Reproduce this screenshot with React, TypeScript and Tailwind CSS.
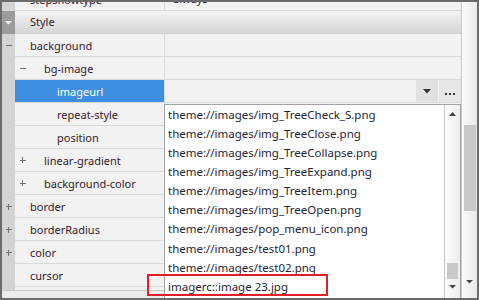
import React from "react";

type Row = {
  name: string;
  level: number;
  sign?: "minus" | "plus";
  value?: string;
  selected?: boolean;
};

const rows: Row[] = [
  { name: "stepshowtype", level: 0, value: "always" },
  { name: "background", level: 0, sign: "minus" },
  { name: "bg-image", level: 1, sign: "minus" },
  { name: "imageurl", level: 2, selected: true },
  { name: "repeat-style", level: 2 },
  { name: "position", level: 2 },
  { name: "linear-gradient", level: 1, sign: "plus" },
  { name: "background-color", level: 1, sign: "plus" },
  { name: "border", level: 0, sign: "plus" },
  { name: "borderRadius", level: 0, sign: "plus" },
  { name: "color", level: 0, sign: "plus" },
  { name: "cursor", level: 0 },
  { name: "", level: 0 },
];

const options = [
  "theme://images/img_TreeCheck_S.png",
  "theme://images/img_TreeClose.png",
  "theme://images/img_TreeCollapse.png",
  "theme://images/img_TreeExpand.png",
  "theme://images/img_TreeItem.png",
  "theme://images/img_TreeOpen.png",
  "theme://images/pop_menu_icon.png",
  "theme://images/test01.png",
  "theme://images/test02.png",
  "imagerc::image 23.jpg",
];

const font = { fontFamily: '"Noto Sans", "Open Sans", sans-serif' };

function Sign({ type }: { type?: "minus" | "plus" }) {
  if (!type) return null;
  return (
    <span className="w-[7px] h-[7px] relative flex items-center justify-center">
      <span className="absolute w-[6px] h-px bg-[#707070]" />
      {type === "plus" && <span className="absolute w-px h-[6px] bg-[#707070]" />}
    </span>
  );
}

function PropRow({ row }: { row: Row }) {
  const top = row.level === 0;
  return (
    <div className="h-[23px] flex shrink-0">
      {/* gutter */}
      <div className="w-[13px] bg-[#d3d3d3] flex items-center justify-center">
        {top && <Sign type={row.sign} />}
      </div>
      <div className="flex-1 flex border-b border-[#d9d9d9]">
        <div
          className={`w-[149px] flex items-center ${row.selected ? "bg-[#3d8fe1] text-white" : "bg-[#f2f2f2] text-[#35202c]"}`}
        >
          {row.level === 1 && (
            <span className="pl-[4px] w-[29px] flex">
              <Sign type={row.sign} />
            </span>
          )}
          <span
            className={`text-[11px] leading-none ${row.level === 0 ? "pl-[15px]" : row.level === 2 ? "pl-[42px]" : ""}`}
          >
            {row.name}
          </span>
        </div>
        <div className="w-px bg-[#d9d9d9]" />
        <div className="flex-1 bg-[#f2f2f2] flex items-center">
          {row.value && <span className="pl-[8px] text-[11px] text-[#35202c]">{row.value}</span>}
          {row.selected && (
            <div className="ml-auto h-full flex">
              <div className="w-[22px] h-full bg-[#e1e1e1] flex items-center justify-center">
                <svg width="8" height="5" viewBox="0 0 8 5">
                  <path d="M0 0H8L4 4.5Z" fill="#333" />
                </svg>
              </div>
              <div className="w-px bg-[#f2f2f2]" />
              <div className="w-[22px] h-full bg-[#e6e6e6] flex items-center justify-center pt-[5px] gap-[2px]">
                <span className="w-[2px] h-[2px] bg-[#333]" />
                <span className="w-[2px] h-[2px] bg-[#333]" />
                <span className="w-[2px] h-[2px] bg-[#333]" />
              </div>
            </div>
          )}
        </div>
      </div>
    </div>
  );
}

function StyleHeader() {
  return (
    <div className="h-[23px] flex shrink-0">
      <div className="w-[13px] bg-[#9b9b9b] flex items-center justify-center">
        <svg width="7" height="4" viewBox="0 0 7 4">
          <path d="M0 0H7L3.5 3.5Z" fill="#fff" />
        </svg>
      </div>
      <div className="flex-1 flex items-center bg-gradient-to-b from-[#f3f3f3] to-[#d6d6d6] border-b border-[#d0d0d0]">
        <span className="pl-[15px] text-[11px] text-[#35202c]">Style</span>
      </div>
    </div>
  );
}

export default function App() {
  return (
    <div
      className="w-[479px] h-[300px] relative overflow-hidden border-2 border-[#6b6b6b] bg-[#f0f0f0] flex"
      style={font}
    >
      {/* grid */}
      <div className="flex-1 flex flex-col">
        <div className="flex-1 overflow-hidden flex flex-col">
          <div className="-mt-[14px] flex flex-col">
            <PropRow row={rows[0]} />
            <StyleHeader />
            {rows.slice(1).map((r, i) => (
              <PropRow key={i} row={r} />
            ))}
          </div>
        </div>
        <div className="h-[8px] border-t border-[#c8c8c8] bg-[#ececec] shrink-0" />
      </div>

      {/* main scrollbar */}
      <div className="w-[16px] border-l border-[#c9c9c9] bg-gradient-to-r from-[#fbfbfb] to-[#e9e9e9] flex flex-col items-center">
        <div className="h-[123px]" />
        <div className="w-[12px] h-[86px] bg-[#c9c9c9]" />
        <div className="flex-1" />
        <svg width="7" height="4" viewBox="0 0 7 4" className="mb-[14px]">
          <path d="M0 0H7L3.5 3.5Z" fill="#444" />
        </svg>
      </div>

      {/* dropdown list */}
      <div className="absolute left-[162px] top-[102px] w-[297px] h-[200px] bg-white border border-[#a3a3a3] flex">
        <div className="flex-1 flex flex-col">
          {options.map((o) => (
            <div key={o} className="h-[19.1px] shrink-0 flex items-center pl-[3px] text-[11.5px] text-[#1f2433]">
              {o}
            </div>
          ))}
        </div>
        <div className="w-[16px] border-l border-[#c6c6c6] bg-gradient-to-r from-[#fdfdfd] to-[#ececec] flex flex-col items-center">
          <svg width="7" height="4" viewBox="0 0 7 4" className="mt-[7px]">
            <path d="M3.5 0L7 4H0Z" fill="#444" />
          </svg>
          <div className="flex-1" />
          <div className="w-[11px] h-[16px] bg-[#c9c9c9]" />
          <svg width="7" height="4" viewBox="0 0 7 4" className="mt-[6px] mb-[14px]">
            <path d="M0 0H7L3.5 3.5Z" fill="#444" />
          </svg>
        </div>
      </div>

      {/* annotation */}
      <div className="absolute left-[145px] top-[272px] w-[181px] h-[22px] border-2 border-[#e21f26]" />
    </div>
  );
}
